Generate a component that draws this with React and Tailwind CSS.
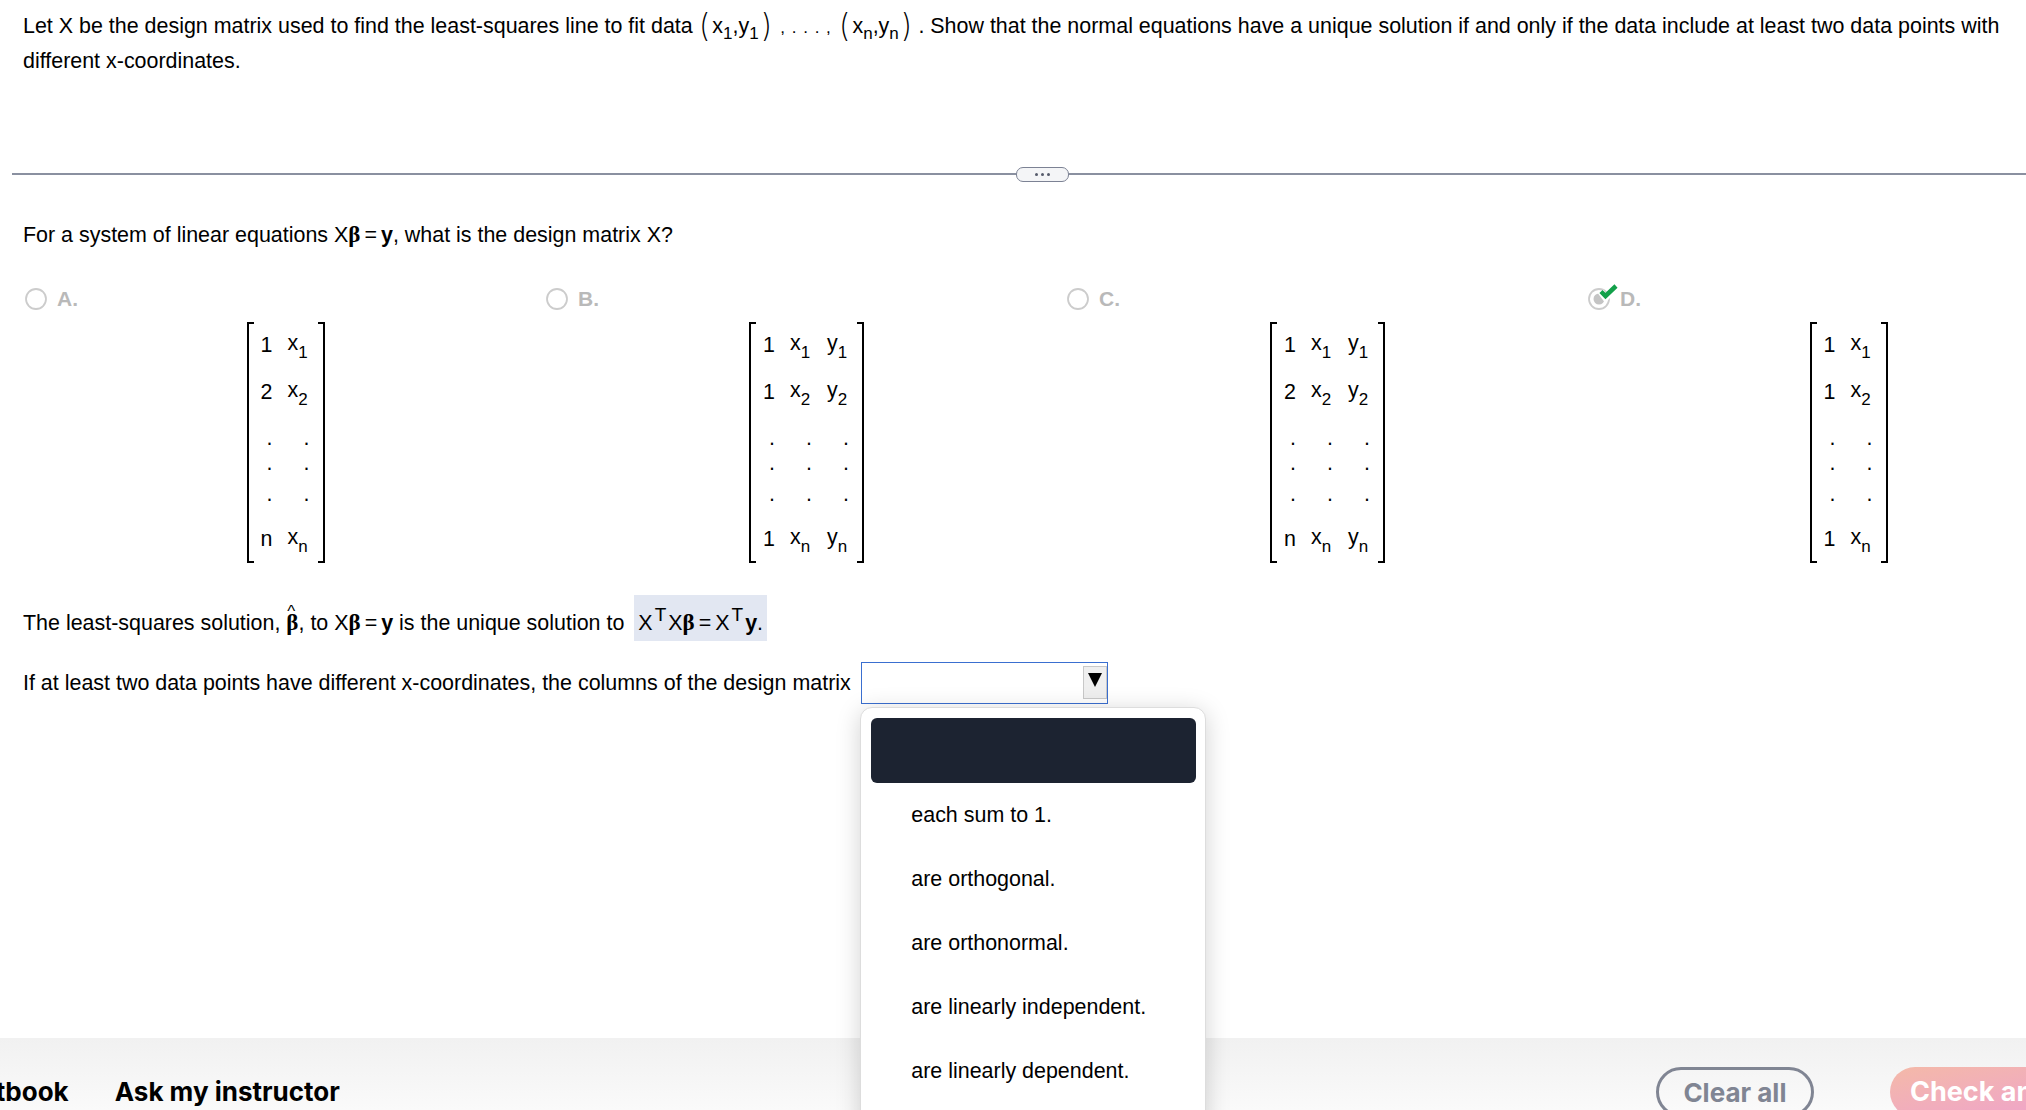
function Sub({ children }) {
  return <span className="relative top-[6px] text-[17px] leading-none">{children}</span>;
}

function Sup({ children }) {
  return <span className="relative -top-[9px] mx-[2px] text-[19px] leading-none">{children}</span>;
}

function Beta() {
  return <span className="[font-family:'Liberation_Serif',serif] font-bold text-[23px] leading-none">β</span>;
}

function Eq() {
  return <span className="mx-[4px]">=</span>;
}

function Paren({ children }) {
  return <span className="relative -top-[1px] text-[32px] leading-none font-extralight [font-family:Inter,sans-serif]">{children}</span>;
}

function Point({ a, b }) {
  return (
    <span className="inline-flex items-center h-[35px] align-top">
      <Paren>(</Paren>
      <span className="mx-[3px]">
        x<Sub>{a}</Sub>,y<Sub>{b}</Sub>
      </span>
      <Paren>)</Paren>
    </span>
  );
}

function Radio({ checked }) {
  return (
    <span className="relative w-[22px] h-[22px] shrink-0">
      <svg width="22" height="22" viewBox="0 0 22 22">
        <circle cx="11" cy="11" r="10" fill="white" stroke="#cccccc" strokeWidth="1.8" />
        {checked && <circle cx="11" cy="11" r="5.5" fill="#c4c4c4" />}
      </svg>
      {checked && (
        <svg className="absolute -top-[5px] left-[10px]" width="21" height="19" viewBox="0 0 21 19">
          <path d="M2.5 8.5 L7.5 15 L18.5 2.5" fill="none" stroke="white" strokeWidth="6.5" />
          <path d="M3 8.5 L7.5 13 L18 3" fill="none" stroke="#12a04a" strokeWidth="4.5" />
        </svg>
      )}
    </span>
  );
}

function Cell({ v, s }) {
  return (
    <span className="whitespace-nowrap">
      <span className="relative -top-[2px]">{v}</span>
      {s && <Sub>{s}</Sub>}
    </span>
  );
}

function Row({ h, first, x, y, dots }) {
  return (
    <div className={`flex items-center shrink-0 gap-[15px] ${h}`}>
      <span className={dots ? "w-[12px] text-right" : "w-[12px] flex justify-center"}>{dots ? "." : first}</span>
      <span className={dots ? "w-[22px] text-right" : "w-[22px]"}>{dots ? "." : <Cell v="x" s={x} />}</span>
      {y !== undefined && (
        <span className={dots ? "w-[22px] text-right" : "w-[22px]"}>{dots ? "." : <Cell v="y" s={y} />}</span>
      )}
    </div>
  );
}

function Matrix({ col1, hasY }) {
  const yv = (s) => (hasY ? s : undefined);
  return (
    <div className="flex justify-center h-[241px] pl-[2px]">
      <div className="w-[7px] border-l-2 border-y-2 border-black" />
      <div className="flex flex-col pl-[7px] pr-[8px]">
        <Row h="h-[46px]" first="1" x="1" y={yv("1")} />
        <Row h="h-[48px]" first={col1} x="2" y={yv("2")} />
        <Row h="h-6 mt-[10px]" dots y={yv("")} />
        <Row h="h-[26px]" dots y={yv("")} />
        <Row h="h-9" dots y={yv("")} />
        <Row h="h-[54px]" first={col1 === "2" ? "n" : "1"} x="n" y={yv("n")} />
      </div>
      <div className="w-[7px] border-r-2 border-y-2 border-black" />
    </div>
  );
}

const options = [
  { label: "A.", col1: "2", hasY: false },
  { label: "B.", col1: "1", hasY: true },
  { label: "C.", col1: "2", hasY: true },
  { label: "D.", col1: "1", hasY: false, checked: true },
];

const choices = ["each sum to 1.", "are orthogonal.", "are orthonormal.", "are linearly independent.", "are linearly dependent."];

export default function App() {
  return (
    <div className="relative flex flex-col h-[1110px] overflow-hidden bg-white text-black text-[21.45px] [font-family:'Liberation_Sans',Arial,sans-serif]">
      <div className="h-[173px] shrink-0 pl-[23px] pt-[9px]">
        <p className="h-[35px] leading-[35px] whitespace-nowrap">
          Let X be the design matrix used to find the least-squares line to fit data{" "}
          <Point a="1" b="1" />
          <span className="ml-[8px] mr-[7px] text-[17px] tracking-[1px]">, . . . ,</span>
          <Point a="n" b="n" />
          <span className="ml-[6px]">
            . Show that the normal equations have a unique solution if and only if the data include at least two data
            points with
          </span>
        </p>
        <p className="leading-[34px]">different x-coordinates.</p>
      </div>

      <div className="flex items-center h-[2px] pl-[12px] shrink-0">
        <div className="w-[1004px] h-[1.5px] bg-[#8a90a0]" />
        <div className="flex items-center justify-center gap-[3px] w-[53px] h-[15px] shrink-0 rounded-[7px] border border-[#7c8294] bg-[#f4f5f7]">
          <span className="w-[3px] h-[3px] rounded-full bg-[#555b6b]" />
          <span className="w-[3px] h-[3px] rounded-full bg-[#555b6b]" />
          <span className="w-[3px] h-[3px] rounded-full bg-[#555b6b]" />
        </div>
        <div className="flex-1 h-[1.5px] bg-[#8a90a0]" />
      </div>

      <p className="mt-[46px] pl-[23px] leading-[28px]">
        For a system of linear equations X<Beta /><Eq /><b>y</b>, what is the design matrix X?
      </p>

      <div className="mt-[38px] pl-[24px] grid grid-cols-[repeat(4,521px)] w-[2200px]">
        {options.map((o) => (
          <div key={o.label}>
            <div className="flex items-center gap-[10px] h-[24px] pl-[1px]">
              <Radio checked={o.checked} />
              <span className="font-bold text-[21px] text-[#b9b9b9]">{o.label}</span>
            </div>
            <div className="mt-[11px]">
              <Matrix col1={o.col1} hasY={o.hasY} />
            </div>
          </div>
        ))}
      </div>

      <div className="mt-[32px] pl-[23px] flex items-center h-[46px]">
        <span className="mt-[10px]">
          The least-squares solution,{" "}
          <span className="relative">
            <Beta />
            <span className="absolute -top-[12px] left-[1px] text-[17px]">^</span>
          </span>
          , to X<Beta /><Eq /><b>y</b> is the unique solution to
        </span>
        <span className="ml-[10px] h-full flex items-center px-[4px] pt-[10px] bg-[#e2e7f2] whitespace-pre">
          <span>
            X<Sup>T</Sup>X<Beta /><Eq />X<Sup>T</Sup>
            <b>y</b>.
          </span>
        </span>
      </div>

      <div className="mt-[21px] pl-[23px] flex items-center h-[42px]">
        <span>If at least two data points have different x-coordinates, the columns of the design matrix</span>
        <div className="relative ml-[10px] w-[247px] h-[42px] border-[1.5px] border-[#3a6fd0] flex justify-end items-start pt-[3px]">
          <div className="flex justify-center pt-[6px] w-[24px] h-[33px] border border-[#c8c8c8] bg-[#efefef]">
            <svg width="14" height="14" viewBox="0 0 14 14">
              <polygon points="0,0 14,0 7,14" fill="black" />
            </svg>
          </div>
          <div className="absolute z-10 -left-[1.5px] top-[44px] w-[346px] h-[460px] pl-[10px] pr-[9px] pt-[10px] rounded-[12px] border border-[#dddddd] bg-white shadow-[0_4px_24px_rgba(0,0,0,0.18)]">
            <div className="h-[65px] rounded-[6px] bg-[#1c2331]" />
            {choices.map((c) => (
              <div key={c} className="flex items-center h-[64px] pl-[40px]">
                {c}
              </div>
            ))}
          </div>
        </div>
      </div>

      <div className="mt-auto flex items-start h-[72px] pt-[29px] bg-gradient-to-b from-[#f1f1f1] to-[#fafafa] [font-family:Inter,sans-serif] text-[26px] font-bold whitespace-nowrap">
        <span className="-ml-[50px] leading-[50px]">Textbook</span>
        <span className="ml-[46px] leading-[50px]">Ask my instructor</span>
        <span className="ml-[1316px] flex items-center justify-center w-[158px] h-[50px] shrink-0 rounded-full border-[3px] border-[#808593] text-[#808593]">
          Clear all
        </span>
        <span className="ml-[76px] pl-[20px] flex items-center w-[240px] h-[50px] shrink-0 rounded-full bg-gradient-to-br from-[#f4b9a8] to-[#ee9fd0] text-white text-[27px]">
          Check answer
        </span>
      </div>
    </div>
  );
}
